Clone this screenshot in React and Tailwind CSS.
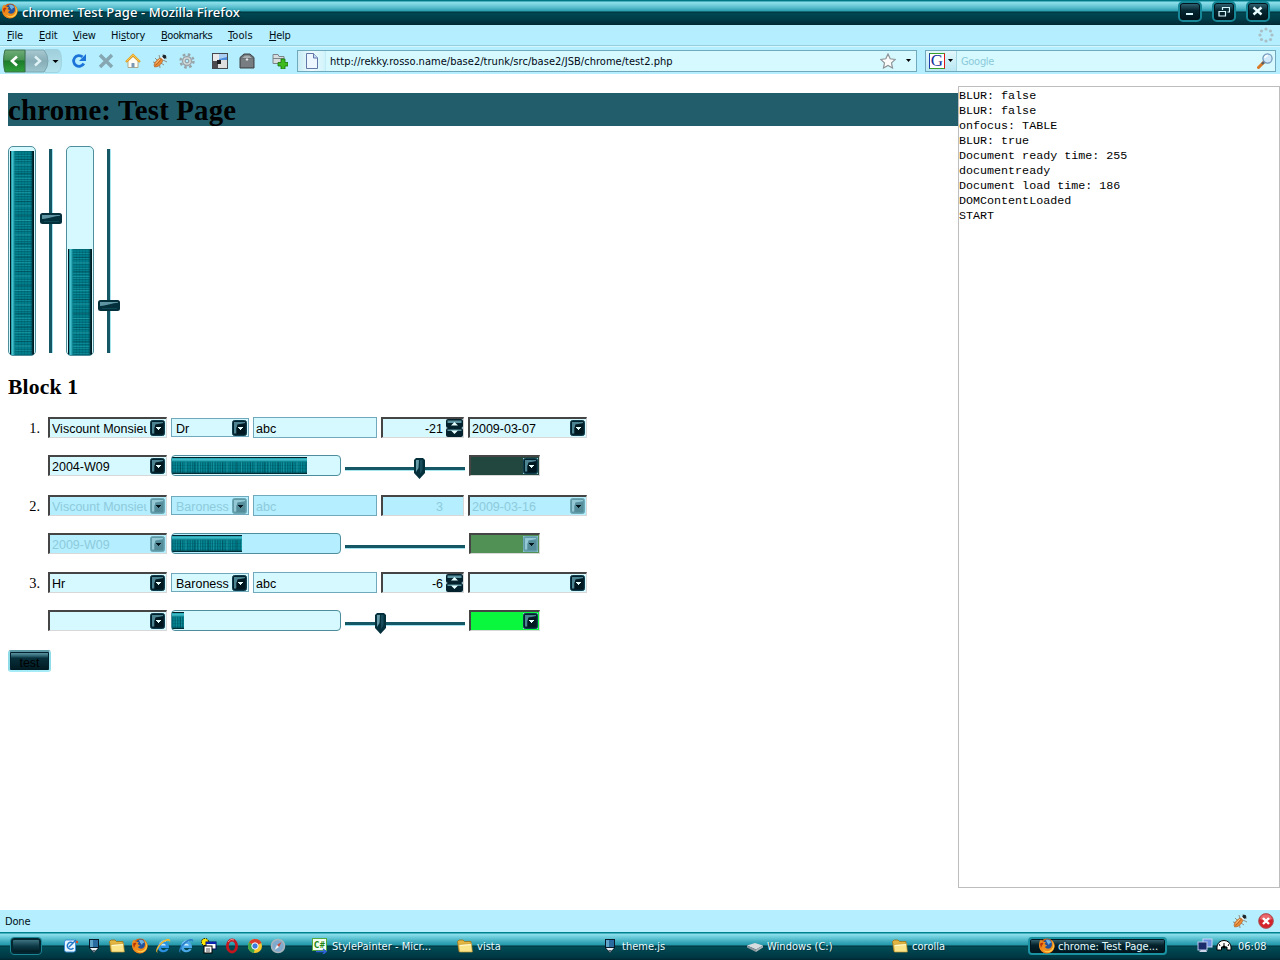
const UI = "font-['DejaVu_Sans_Condensed','DejaVu_Sans',sans-serif] [font-stretch:condensed]";

function Svg({ w = 16, h = 16, vb, className = '', children }) {
  return (
    <svg width={w} height={h} viewBox={vb || `0 0 ${w} ${h}`} className={'block shrink-0 ' + className}>
      {children}
    </svg>
  );
}

const Firefox = () => (
  <Svg>
    <circle cx="8" cy="8" r="7.6" fill="#d9600c" />
    <circle cx="8.8" cy="6.4" r="5.2" fill="#23539c" />
    <path d="M7 2c2-1 5 0 5.500 3-1.500-.5-2 .5-2.500 2-1-1-2.500-3-3-5z" fill="#6fb2e4" />
    <path d="M.5 3.500 2 1.500l1.500 2L7 4.200 5.500 6 8 7.500 6 9c1 2 5 2.500 6.500-.5C13.500 6 12.800 3.500 11 1.400c4 1.600 5.500 5.600 4 9C13 15 7.500 16.500 3.500 14-.3 11.500-.3 7 .5 3.500z" fill="#ef8a1c" />
    <path d="M12.500 3c2.500 3 2 7.500-1.500 9.500-3 1.500-6 .5-7.500-1.500 2 4 7 4.300 9.800 1.500 2.500-2.600 2.200-7-.8-9.500z" fill="#fbd04b" />
    <path d="M1 6c.5-1 2-1.500 3.500-1L3 7.500 2 10z" fill="#b8340a" />
  </Svg>
);

const Bug = () => (
  <Svg>
    <path d="M3 5l3 3M1 9l4 1M2 14l3-2M8 15l-.5-4M12 12l-3-2M15 9l-4-2M7 2l1 4M11 1l1 3M15 5l-3 0" stroke="#8d8478" strokeWidth=".9" fill="none" />
    <ellipse cx="6.500" cy="9.500" rx="5.600" ry="2.700" transform="rotate(-45 6.500 9.500)" fill="#e98a35" stroke="#a8622a" strokeWidth=".6" />
    <path d="M3.500 12.500 10 5.500" stroke="#9a5320" strokeWidth=".7" />
    <path d="M4 10.500l4-4.500" stroke="#ffc98a" strokeWidth="1" />
    <circle cx="12.300" cy="3.800" r="2" fill="#1c2830" />
    <path d="M9.300 4l2.500 2.500" stroke="#f4f4f4" strokeWidth="1.300" />
  </Svg>
);

const Folder = () => (
  <Svg>
    <path d="M.5 3.500 2 2h4l1.500 1.500H14v10H2z" fill="#e3b541" stroke="#9c7117" strokeWidth=".8" />
    <path d="M1.500 6.500 14.500 5.500l.8 8.500H2.500z" fill="#fbe58a" stroke="#c39a32" strokeWidth=".7" />
    <path d="M3 7.500l11-.8" stroke="#fffbd2" strokeWidth="1" />
  </Svg>
);

const Brush = () => (
  <Svg>
    <path d="M3 1h10v9l-5 5-5-5z" fill="#081a2a" />
    <path d="M4 2h8v7H4z" fill="#296b9f" />
    <path d="M4 2h3v7H4z" fill="#5fa3c9" />
    <path d="M4 10h8l-4 4.500z" fill="#e8f0f4" />
    <path d="M6 12h4l-2 2.500z" fill="#52646e" />
  </Svg>
);

const IE = ({ ring = '#f3b82e', body = '#2b91e0' }) => (
  <Svg>
    <path d="M14 10H6c.3 2.600 4 2.800 5 .8h2.700C12 16 2.800 15.500 2.800 8.700 2.800 1.200 14.500.8 14 10z" fill={body} />
    <path d="M6 7.500c.3-2.300 4.500-2.300 4.900 0z" fill="#c9eeff" />
    <path d="M4.500 5.500c1-2.300 4-3.300 6.300-1.800" stroke="#9ddcff" strokeWidth="1" fill="none" />
    <path d="M2.800 15C-1.500 14 3.500 5.500 9 2.300c4-2.200 7-2 6 1.900C14.500 1.500 9.500 3.200 6 6.700 2.800 10 1.200 14 2.800 15z" fill={ring} />
  </Svg>
);

/* ---------- title bar and browser chrome ---------- */

function WinButton({ children }) {
  return (
    <div className="flex h-[21px] w-6 items-center justify-center rounded-[5px] border-2 border-[#168797] bg-linear-to-b from-[#376b7a] from-0% via-[#052631] via-45% to-[#00141c] shadow-[inset_0_0_0_1px_#00151e]">
      {children}
    </div>
  );
}

const BAR =
  'bg-[linear-gradient(to_bottom,#006b7a_0px,#00808d_1px,#8ce0ec_2px,#7fd5e3_4px,#52b9ca_8px,#289dae_11px,#00303b_12px,#00454f_13px,#004650_14px,#003d49_19px,#002c37_24px,#00252f_100%)]';

function TitleBar() {
  return (
    <div className={`flex h-[25px] shrink-0 items-center ${BAR}`}>
      <div className="ml-0.5 -mt-1"><Firefox /></div>
      <div className="-mt-px ml-1 grow text-[13px] leading-[24px] font-medium tracking-[0.1px] text-white [text-shadow:1px_1px_0_#002a35] font-['Noto_Sans',sans-serif]">
        chrome: Test Page - Mozilla Firefox
      </div>
      <div className="-mt-0.5 mr-[10px] flex gap-[10px]">
        <WinButton>
          <Svg w={12} h={12}><path d="M2 7h7v2H2z" fill="#d8f8ff" /></Svg>
        </WinButton>
        <WinButton>
          <Svg w={12} h={12}><path d="M1 5.500h6.500v4.500H1zM4.500 4V1.500h7v4.500H9.500" fill="none" stroke="#d8f8ff" strokeWidth="1.200" /></Svg>
        </WinButton>
        <WinButton>
          <Svg w={12} h={12}><path d="M1.500 1.500l8 7M9.500 1.500l-8 7" stroke="#e8fbff" strokeWidth="2.400" /></Svg>
        </WinButton>
      </div>
    </div>
  );
}

function MenuItem({ pre = '', k, post, className }) {
  return <span className={className}>{pre}<u className="underline-offset-1">{k}</u>{post}</span>;
}

function MenuBar() {
  return (
    <div className={`flex h-[21px] shrink-0 items-center border-b border-[#94cfdb] bg-[#b4eeff] text-[11px] leading-5 text-[#001018] ${UI}`}>
      <div className="flex grow pt-px">
        <MenuItem k="F" post="ile" className="ml-[7px] w-8 tracking-[-0.1px]" />
        <MenuItem k="E" post="dit" className="w-[34px] tracking-[-0.2px]" />
        <MenuItem k="V" post="iew" className="w-[38px] tracking-[-0.2px]" />
        <MenuItem pre="Hi" k="s" post="tory" className="w-[50px] tracking-[-0.15px]" />
        <MenuItem k="B" post="ookmarks" className="w-[67px] tracking-[-0.45px]" />
        <MenuItem k="T" post="ools" className="w-[41px] tracking-[0.1px]" />
        <MenuItem k="H" post="elp" className="tracking-[-0.3px]" />
      </div>
      <Svg className="mr-[6px]">
        <g fill="#a9bfc6">
          <circle cx="8" cy="2" r="1.600" /><circle cx="12.500" cy="4" r="1.600" /><circle cx="14" cy="8" r="1.600" /><circle cx="12.500" cy="12.500" r="1.600" />
          <circle cx="8" cy="14" r="1.600" /><circle cx="3.500" cy="12.500" r="1.600" /><circle cx="2" cy="8" r="1.600" /><circle cx="3.500" cy="4" r="1.600" />
        </g>
      </Svg>
    </div>
  );
}

const Caret = ({ className = '' }) => (
  <Svg w={5} h={3} className={className}><path d="M0 0h5L2.500 3z" fill="#000" /></Svg>
);

function NavBar() {
  return (
    <div className="flex h-7 shrink-0 items-center border-t border-[#d7f7ff] bg-[#b4eeff]">
      <Svg w={60} h={24} className="ml-[3px]">
        <defs>
          <linearGradient id="gb" x1="0" y1="0" x2="0" y2="1"><stop offset="0" stopColor="#6fae78" /><stop offset=".45" stopColor="#479253" /><stop offset=".5" stopColor="#1c7a2a" /><stop offset="1" stopColor="#2fa03a" /></linearGradient>
          <linearGradient id="gf" x1="0" y1="0" x2="0" y2="1"><stop offset="0" stopColor="#a9c9d0" /><stop offset=".5" stopColor="#87adb7" /><stop offset="1" stopColor="#9cc6cf" /></linearGradient>
          <linearGradient id="gd" x1="0" y1="0" x2="0" y2="1"><stop offset="0" stopColor="#a0cfdb" /><stop offset="1" stopColor="#b5e4ef" /></linearGradient>
        </defs>
        <path d="M42 .5h12q4.500 0 4.500 11.500T54 23.500H42z" fill="url(#gd)" stroke="#9bcfdc" strokeWidth=".8" />
        <path d="M22 1h19q4 5 4 11t-4 11H22z" fill="url(#gf)" stroke="#7ba5af" />
        <path d="M2 1h20v22H2Q.5 18 .5 12T2 1z" fill="url(#gb)" stroke="#3b6f4c" />
        <path d="M14 7.500 9 12l5 4.500" fill="none" stroke="#fff" strokeWidth="2.600" />
        <path d="M32 7.500 37 12l-5 4.500" fill="none" stroke="#dff2f6" strokeWidth="2.400" />
        <path d="M49.500 11h6l-3 3z" fill="#000" />
      </Svg>
      <Svg className="ml-2">
        <path d="M12.800 10.500A5.400 5.400 0 1 1 11.500 3.800" fill="none" stroke="#1c74d9" strokeWidth="2.800" />
        <path d="M15 1v7H8z" fill="#1c74d9" />
      </Svg>
      <Svg className="ml-[11px]"><path d="M2 2l12 12M14 2L2 14" stroke="#86a7b1" strokeWidth="3.400" /></Svg>
      <Svg className="ml-[11px]">
        <path d="M3 8v6.500h10V8L8 3.500z" fill="#fffdf4" stroke="#a4976e" strokeWidth=".8" />
        <path d="M1 9 8 2l7 7" fill="none" stroke="#e39b1d" strokeWidth="2.200" />
        <path d="M1.500 8.300 8 1.900l6.500 6.400" fill="none" stroke="#ffd45c" strokeWidth=".9" />
        <path d="M6.500 10h3v4.500h-3z" fill="#7a99b8" />
      </Svg>
      <div className="ml-[11px]"><Bug /></div>
      <Svg className="ml-[11px]">
        <circle cx="8" cy="8" r="6.500" fill="none" stroke="#98a3a7" strokeWidth="2.400" strokeDasharray="2.600 2.505" />
        <circle cx="8" cy="8" r="4.500" fill="#d3d8da" stroke="#9aa5a9" strokeWidth="1.400" />
        <circle cx="8" cy="8" r="1.900" fill="#b4eeff" stroke="#87959a" />
      </Svg>
      <Svg className="ml-[17px]">
        <rect width="16" height="16" fill="#45494d" />
        <rect x="1" y="1" width="6" height="7" fill="#e9e9e9" /><rect x="7" y="1" width="8" height="6" fill="#a9cdf3" /><path d="M7 6l8-2v3H7z" fill="#4d8dde" />
        <rect x="1" y="8" width="5" height="7" fill="#4a4c4f" /><rect x="6" y="7" width="9" height="8" fill="#dedede" /><rect x="5" y="7" width="4" height="4" fill="#1e2124" />
      </Svg>
      <Svg className="ml-[11px]">
        <path d="M1 4.500 5 1h6l4 3.500V15H1z" fill="#6b7174" stroke="#3f4447" />
        <path d="M3 5l3-2.500h4L13 5z" fill="#a7adaf" /><path d="M2 6h12v8H2z" fill="#777d80" /><path d="M6.500 6.500 8 5l1.500 1.500L8 8z" fill="#e6e6e6" />
      </Svg>
      <Svg className="ml-[17px]">
        <path d="M1 1.500h5l1 2h5v7H1z" fill="#d7dcde" stroke="#7c868a" /><path d="M1 5.500h11" stroke="#7c868a" />
        <path d="M9 6h4v3.500h3v3.500h-3V16H9v-3H6V9.500h3z" fill="#3dbb1f" stroke="#16720b" strokeWidth=".8" />
      </Svg>
      <div className="ml-[9px] flex h-[22px] w-[620px] items-center border border-[#6fa9bb] bg-[#d6f9ff]">
        <div className="flex h-full w-7 items-center justify-center border-r border-[#c3edf6] bg-linear-to-r from-[#c8ecf5] via-[#eefbff] to-[#d0f3fb]">
          <Svg><path d="M2.500.5h7L13.500 5v10.500h-11z" fill="#eef6ff" stroke="#6077a8" /><path d="M9.500.5V5h4" fill="#c6dcf5" stroke="#6077a8" /></Svg>
        </div>
        <div className={`ml-1 grow pt-0.5 text-[11px] leading-5 tracking-[0.035px] whitespace-nowrap text-[#000814] ${UI}`}>
          http://rekky.rosso.name/base2/trunk/src/base2/JSB/chrome/test2.php
        </div>
        <Svg className="mr-[10px]"><path d="M8 1l2.200 4.800 5.100.6-3.800 3.500 1 5.100L8 12.500 3.500 15l1-5.100L.7 6.400l5.100-.6z" fill="#fbfbfb" stroke="#8d9396" strokeWidth="1.200" /></Svg>
        <Caret className="mr-[5px]" />
      </div>
      <div className="ml-2 flex h-[22px] w-[351px] items-center border border-[#6fa9bb] bg-[#d6f9ff]">
        <div className="flex h-full w-[31px] items-center border-r border-[#a5d6e3] bg-linear-to-b from-[#e3f7fb] to-[#b9e8f3] pl-[3px]">
          <div className="flex size-4 items-center justify-center border border-t-[#33a02c] border-r-[#e01515] border-b-[#33a02c] border-l-[#1c3fb0] bg-white font-['Liberation_Serif',serif] text-[17px] leading-none text-[#142f9c]">G</div>
          <Caret className="ml-[3px]" />
        </div>
        <span className={`ml-1 grow pt-0.5 text-[11px] leading-5 tracking-[-0.3px] text-[#8bc9da] ${UI}`}>Google</span>
        <Svg className="mr-[2px]">
          <path d="M1.500 14.500 7 9" stroke="#d97825" strokeWidth="3" strokeLinecap="round" /><path d="M5 11l2-2" stroke="#53606a" strokeWidth="2.400" />
          <circle cx="10.500" cy="5.500" r="4.600" fill="#cfe9fb" stroke="#7195b8" strokeWidth="1.200" /><path d="M7.800 5a3 3 0 0 1 3-2.500" stroke="#fff" strokeWidth="1.400" fill="none" />
        </Svg>
      </div>
    </div>
  );
}

/* ---------- page widgets ---------- */

function DropButton({ disabled }) {
  return (
    <Svg w={15} h={16}>
      <rect x=".5" y=".5" width="14" height="15" rx="2" fill={disabled ? '#5f9aa8' : '#04222d'} stroke={disabled ? '#6ea8b5' : '#0d3d4c'} />
      <path d="M2 2h11v1L6 4.500 4.500 8v5.500H2z" fill={disabled ? '#93c8d4' : '#4d8492'} />
      <path d="M5.500 4.500H13V14H4.500V8z" fill={disabled ? '#548c9a' : '#021820'} />
      <path d="M6 7h5v1h-1v1H9v1H8V9H7V8H6z" fill={disabled ? '#00141b' : '#e6ffff'} />
    </Svg>
  );
}

const FONT = "font-['Liberation_Sans',Arial,sans-serif] text-[12.5px]";
const INSET = 'border-t-2 border-l-2 border-r border-b border-t-[#454545] border-l-[#454545] border-r-[#d8d8d8] border-b-[#d8d8d8]';

function Combo({ value, disabled }) {
  return (
    <div className={`flex h-[21px] w-[119px] items-center ${INSET} ${disabled ? 'bg-[#b4eeff] text-[#8ecbdb]' : 'bg-[#d6f9ff] text-black'} pr-px pl-0.5 ${FONT}`}>
      <span className="mr-[3px] w-0 grow overflow-hidden pt-0.5 leading-[16px] whitespace-nowrap">{value}</span>
      <DropButton disabled={disabled} />
    </div>
  );
}

function Select({ value, disabled }) {
  return (
    <div className={`flex h-[19px] w-[78px] items-center border border-[#6fa9bb] ${disabled ? 'bg-[#b4eeff] text-[#8ecbdb]' : 'bg-[#d6f9ff] text-black'} pr-px pl-1 ${FONT}`}>
      <span className="grow pt-[3px] leading-[16px]">{value}</span>
      <DropButton disabled={disabled} />
    </div>
  );
}

function TextInput({ value, disabled }) {
  return (
    <div className={`h-[21px] w-[124px] border border-[#6fa9bb] pt-px pl-0.5 leading-[20px] ${disabled ? 'bg-[#b4eeff] text-[#8ecbdb]' : 'bg-[#d6f9ff] text-black'} ${FONT}`}>{value}</div>
  );
}

function NumberInput({ value, disabled }) {
  return (
    <div className={`flex h-[21px] w-[83px] items-center justify-end ${INSET} ${disabled ? 'bg-[#b4eeff] text-[#8ecbdb]' : 'bg-[#d6f9ff] text-black'} ${FONT}`}>
      <span className={disabled ? 'mr-5 pt-0.5 leading-[16px]' : 'mr-[3px] pt-0.5 leading-[16px]'}>{value}</span>
      {!disabled && (
        <Svg w={17} h={18}>
          <rect width="17" height="9" rx="2" fill="#04222d" /><rect y="9" width="17" height="9" rx="2" fill="#04222d" />
          <path d="M1.500 1.500h14V4h-14zM1.500 10.500h14V12h-14z" fill="#5b93a1" />
          <path d="M5 6.500 8.500 3 12 6.500zM5 11.500h7L8.500 15z" fill="#e6ffff" />
        </Svg>
      )}
    </div>
  );
}

const FILL_H =
  'bg-[linear-gradient(to_bottom,#001f28_0px,#001f28_1px,#1fa0ad_1px,#48c4d0_3px,#148c98_4px,transparent_6px,transparent_15px,#00404a_16px,#001a22_17px),repeating-linear-gradient(to_right,transparent_0px,transparent_8px,rgba(0,60,72,0.4)_8px,rgba(0,60,72,0.4)_9px,transparent_9px,transparent_13px,rgba(60,190,200,0.3)_13px,rgba(60,190,200,0.3)_14px),repeating-linear-gradient(to_bottom,transparent_0px,transparent_2px,rgba(0,70,82,0.2)_2px,rgba(0,70,82,0.2)_3px),repeating-linear-gradient(to_right,#006b78_0px,#006b78_1px,#007d8a_1px,#007d8a_3px,#006e7b_3px,#006e7b_4px,#0b8b97_4px,#0b8b97_5px)]';
const FILL_V =
  'bg-[linear-gradient(to_right,#00151c_0px,#00151c_1px,#0d7f8b_1px,#3fbecb_2px,#48c4d0_3px,#148c98_4px,transparent_6px,transparent_21px,#00404a_22px,#001a22_23px),repeating-linear-gradient(to_bottom,transparent_0px,transparent_8px,rgba(0,60,72,0.4)_8px,rgba(0,60,72,0.4)_9px,transparent_9px,transparent_13px,rgba(60,190,200,0.3)_13px,rgba(60,190,200,0.3)_14px),repeating-linear-gradient(to_right,transparent_0px,transparent_2px,rgba(0,70,82,0.2)_2px,rgba(0,70,82,0.2)_3px),repeating-linear-gradient(to_bottom,#006b78_0px,#006b78_1px,#007d8a_1px,#007d8a_3px,#006e7b_3px,#006e7b_4px,#0b8b97_4px,#0b8b97_5px)]';

function Progress({ width, disabled }) {
  return (
    <div className={`flex h-[21px] w-[170px] overflow-hidden rounded-[4px] border border-[#4d8d9c] pt-px ${disabled ? 'bg-[#b4eeff]' : 'bg-[#d6f9ff]'}`}>
      <div className={`h-[17px] ${FILL_H}`} style={{ width }} />
    </div>
  );
}

function Slider({ at }) {
  return (
    <Svg w={120} h={24} className="-mb-[3px]">
      <rect y="12" width="120" height="3" fill="#165766" /><rect y="15" width="120" height="1" fill="#a5e3ee" />
      {at != null && (
        <g transform={`translate(${at} 3)`}>
          <path d="M2 0h7l2 2v13l-5.500 6L0 15V2z" fill="#04303c" />
          <path d="M2 2h3l-.5 8L2 14z" fill="#669ca8" /><path d="M6 2h2.500v10L6 16z" fill="#174d5b" />
        </g>
      )}
    </Svg>
  );
}

function VProgress({ height }) {
  return (
    <div className="flex h-[210px] w-7 flex-col justify-end overflow-hidden rounded-[5px] border border-[#4d8d9c] bg-[#d6f9ff] px-px">
      <div className={`w-6 ${FILL_V}`} style={{ height }} />
    </div>
  );
}

function VSlider({ at }) {
  return (
    <Svg w={22} h={210}>
      <rect x="9" y="3" width="3" height="204" fill="#165766" /><rect x="12" y="3" width="1" height="204" fill="#a5e3ee" />
      <g transform={`translate(0 ${at})`}>
        <rect width="22" height="11" rx="2.500" fill="#04303c" />
        <path d="M2 2h18v.8C14 3 10 5.500 2 6z" fill="#5f95a2" /><path d="M4 8.500h15" stroke="#0e4855" />
      </g>
    </Svg>
  );
}

function Row({ n, title, rank, num, date, week, progress, at, color, disabled }) {
  return (
    <div className="flex">
      <div className="w-10 pr-2 text-right font-['Liberation_Serif',serif] text-[14.4px] leading-[22px]">{n}.</div>
      <div className="flex flex-col gap-[17px]">
        <div className="flex gap-1">
          <Combo value={title} disabled={disabled} />
          <div className="pt-px"><Select value={rank} disabled={disabled} /></div>
          <TextInput value="abc" disabled={disabled} />
          <NumberInput value={num} disabled={disabled} />
          <Combo value={date} disabled={disabled} />
        </div>
        <div className="flex h-[21px] gap-1">
          <Combo value={week} disabled={disabled} />
          <Progress width={progress} disabled={disabled} />
          <Slider at={at} />
          <div className={`flex h-[21px] w-[71px] items-center justify-end ${INSET} ${color}`}><div className="mr-px bg-[#8cc5d0]"><DropButton disabled={disabled} /></div></div>
        </div>
      </div>
    </div>
  );
}

const LOG = ['BLUR: false', 'BLUR: false', 'onfocus: TABLE', 'BLUR: true', 'Document ready time: 255', 'documentready', 'Document load time: 186', 'DOMContentLoaded', 'START'];

function Page() {
  return (
    <div className="flex grow bg-white">
      <div className="w-[958px] pt-[19px] pl-2">
        <h1 className="h-[33px] bg-[#215d6a] font-['Liberation_Serif',serif] text-[28.8px] leading-[35px] font-bold tracking-[0.19px]">chrome: Test Page</h1>
        <div className="mt-5 flex">
          <VProgress height={204} />
          <div className="ml-1"><VSlider at={67} /></div>
          <div className="ml-1"><VProgress height={106} /></div>
          <div className="ml-1"><VSlider at={154} /></div>
        </div>
        <h2 className="mt-[18px] h-[25px] font-['Liberation_Serif',serif] text-[21.6px] leading-[27px] font-bold tracking-[0.18px]">Block 1</h2>
        <div className="mt-[18px] flex flex-col">
          <Row n={1} title="Viscount Monsieur" rank="Dr" num="-21" date="2009-03-07" week="2004-W09" progress={135} at={69} color="bg-[#21473f]" />
          <div className="mt-[19px]"><Row n={2} title="Viscount Monsieur" rank="Baroness" num="3" date="2009-03-16" week="2009-W09" progress={70} color="bg-[#529155]" disabled /></div>
          <div className="mt-[18px]"><Row n={3} title="Hr" rank="Baroness" num="-6" date="" week="" progress={12} at={30} color="bg-[#09f83e]" /></div>
        </div>
        <div className={`mt-[19px] h-[22px] w-[43px] rounded-[3px] border-2 border-t-[#5c98a6] border-r-[#8fdbe8] border-b-[#a5ecf8] border-l-[#8fdbe8] bg-[linear-gradient(to_bottom,#04222d_0px,#04222d_1px,#5b93a1_1px,#2d6270_4px,#08303c_6px,#001921_100%)] text-center leading-[22px] text-black shadow-[inset_1px_0_0_#04222d,inset_-1px_0_0_#04222d] ${FONT}`}>test</div>
      </div>
      <div className="mt-3 h-[802px] w-[322px] border border-[#bdbdbd] pt-0.5 font-['Liberation_Mono',monospace] text-[11.7px] leading-[15px] text-black">
        {LOG.map((line, i) => <div key={i}>{line}</div>)}
      </div>
    </div>
  );
}

/* ---------- status bar and taskbar ---------- */

function StatusBar() {
  return (
    <div className={`flex h-[22px] shrink-0 items-center bg-[#b4eeff] pl-[5px] text-[11px] text-[#001018] ${UI}`}>
      <span className="grow pt-0.5 tracking-[-0.15px]">Done</span>
      <Bug />
      <Svg className="mr-[6px] ml-[10px]">
        <circle cx="8" cy="8" r="7.400" fill="#d3242b" stroke="#a8585c" strokeWidth=".9" />
        <path d="M2 6a6.200 6.200 0 0 1 12 0q-6 3-12 0z" fill="#e8686c" />
        <path d="M5 5l6 6M11 5l-6 6" stroke="#fff" strokeWidth="2.400" />
      </Svg>
    </div>
  );
}

function Task({ icon, label, className }) {
  return <div className={`flex items-center gap-1 ${className}`}>{icon}<span className="pt-0.5">{label}</span></div>;
}

function TaskBar() {
  return (
    <div className={`flex h-7 shrink-0 items-center bg-[linear-gradient(to_bottom,#008491_0px,#00808d_1px,#8ce0ec_2px,#6dcddc_5px,#3aa9ba_10px,#2399aa_13px,#00303b_14px,#004c57_15px,#004650_18px,#003540_26px,#00252f_100%)] text-[11px] tracking-[0.03px] whitespace-nowrap text-[#e8fbff] [text-shadow:1px_1px_0_#003542] ${UI}`}>
      <div className="ml-[10px] h-[18px] w-8 rounded-[4px] border border-[#1a8595] bg-linear-to-b from-[#4e8794] via-[#0e3b48] to-[#00141b] shadow-[inset_0_0_0_2px_#042631]" />
      <div className="ml-[21px] flex gap-[7px]">
        <Svg><rect x="1.500" y="2" width="11" height="12" rx="2" fill="#e8f6ff" stroke="#3d8ed6" /><path d="M10.500 5.500a3.500 3.500 0 1 0 0 4.500M6 9l7-7" stroke="#2678c9" strokeWidth="1.500" fill="none" /><circle cx="14" cy="4" r="1.200" fill="#d94c24" /></Svg>
        <Brush /><Folder /><Firefox /><IE /><IE ring="#2c7ec9" body="#4aa7e8" />
        <Svg><circle cx="4" cy="4" r="3.600" fill="#ffe600" stroke="#000" strokeDasharray="1.500 1" /><rect x="5" y="4" width="10" height="7" fill="#fff" stroke="#000a60" /><path d="M5 5h10" stroke="#0a22b0" strokeWidth="2" /><rect x="3" y="8" width="8" height="7" fill="#fff" stroke="#000" /><path d="M5 11h4M5 13h4" stroke="#555" /></Svg>
        <Svg><ellipse cx="8" cy="8" rx="4.600" ry="6" fill="none" stroke="#c4161c" strokeWidth="2.800" /><path d="M4 4q3-4 6-2" stroke="#f58d8d" fill="none" /></Svg>
        <Svg><circle cx="8" cy="8" r="7" fill="#f4c92d" /><path d="M8 8 2 4.500A7 7 0 0 1 14.500 5z" fill="#db3e2c" /><path d="M8 8 2 4.500A7 7 0 0 0 7 15z" fill="#3ea648" /><circle cx="8" cy="8" r="3.200" fill="#3b7de0" stroke="#fff" /></Svg>
        <Svg><circle cx="8" cy="8" r="6.500" fill="#7fa9cd" stroke="#a9b4bb" strokeWidth="1.600" /><path d="M11.500 4 9 9 7 7z" fill="#d24a3a" /><path d="M4.500 12 7 7l2 2z" fill="#f2f2f2" /></Svg>
      </div>
      <Task className="ml-[26px] w-[145px]" icon={<Svg><rect x=".5" y=".5" width="14" height="12" fill="#f2fff0" stroke="#54a83f" /><text x="2" y="9.500" fontSize="8" fontWeight="bold" fill="#1e8413" style={{ textShadow: 'none' }}>C#</text><path d="M4 13.500h9M11 11l3 2.500-3 2.500" stroke="#2f62d9" strokeWidth="1.500" fill="none" /></Svg>} label="StylePainter - Micr..." />
      <Task className="w-[145px]" icon={<Folder />} label="vista" />
      <Task className="w-[145px]" icon={<Brush />} label="theme.js" />
      <Task className="w-[145px]" icon={<Svg><path d="M0 7.500 8 5l8 2.500-7 4z" fill="#d7dcdf" /><path d="M0 7.500l9 4V14L0 9.500z" fill="#8d979d" /><path d="M9 11.500l7-4v2L9 14z" fill="#a9b2b7" /></Svg>} label="Windows (C:)" />
      <Task className="w-[136px]" icon={<Folder />} label="corolla" />
      <div className="flex h-[18px] w-[139px] items-center rounded-[4px] border-2 border-[#1a91a1] bg-linear-to-b from-[#3d6f7c] from-0% via-[#04202a] via-45% to-[#00141b] pl-[9px] shadow-[inset_0_0_0_1px_#00151e]">
        <Task icon={<Firefox />} label="chrome: Test Page..." className="gap-[3px]" />
      </div>
      <Svg className="ml-[30px]"><rect x="6" y="1" width="9" height="8" fill="#6d8fe0" stroke="#c6d7f5" /><rect x="1" y="4" width="9" height="8" fill="#1b2a6b" stroke="#b9c9ec" /><path d="M2 14h8l-1-2H4z" fill="#cdd6e8" /></Svg>
      <Svg className="ml-[3px]"><path d="M1 12V9a7 6.500 0 0 1 14 0v3h-4V9H5.500v3z" fill="#fff" stroke="#000" /><path d="M8 9V5M4 8 3 6M12 8l1-2" stroke="#000" /><circle cx="8" cy="9" r="1.600" fill="#000" /></Svg>
      <span className="ml-[6px] pt-0.5 tracking-[0px]">06:08</span>
    </div>
  );
}

export default function App() {
  return (
    <div className="flex h-[960px] w-[1280px] flex-col overflow-hidden bg-white">
      <TitleBar />
      <MenuBar />
      <NavBar />
      <Page />
      <StatusBar />
      <TaskBar />
    </div>
  );
}
